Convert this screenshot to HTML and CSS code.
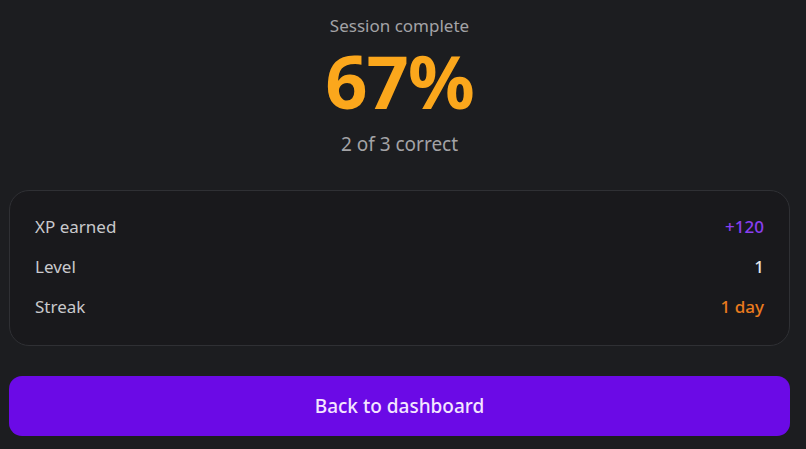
FILE: index.html
```html
<!DOCTYPE html>
<html>
<head>
<meta charset="utf-8">
<link rel="stylesheet" href="styles.css">
</head>
<body>
<main class="page">
  <section class="hero">
    <div class="hero-label">Session complete</div>
    <div class="hero-score">67%</div>
    <div class="hero-sub">2 of 3 correct</div>
  </section>
  <section class="stats">
    <div class="row"><span class="k">XP earned</span><span class="v xp">+120</span></div>
    <div class="row"><span class="k">Level</span><span class="v lvl">1</span></div>
    <div class="row"><span class="k">Streak</span><span class="v streak">1 day</span></div>
  </section>
  <button class="cta">Back to dashboard</button>
</main>
</body>
</html>
```
FILE: styles.css
```css
html, body {
  margin: 0;
  padding: 0;
  background: #1c1d20;
  height: 100%;
}
body {
  font-family: "Noto Sans", "Open Sans", sans-serif;
}
.page {
  display: flex;
  flex-direction: column;
  padding: 0 16px 0 9px;
}
.hero {
  display: flex;
  flex-direction: column;
  align-items: center;
  padding-top: 14px;
  height: 176px;
  box-sizing: border-box;
}
.hero-label {
  font-size: 17px;
  color: #a3a3a6;
  line-height: 24px;
}
.hero-score {
  font-size: 74px;
  font-weight: 700;
  color: #fba71c;
  line-height: 86px;
  letter-spacing: -1px;
}
.hero-sub {
  font-size: 19px;
  color: #a3a3a6;
  line-height: 26px;
  margin-top: 7px;
}
.stats {
  border: 1px solid #2f3034;
  border-radius: 20px;
  background: #19191c;
  padding: 24px 25px 25px 25px;
  display: flex;
  flex-direction: column;
  gap: 16px;
  height: 156px;
  box-sizing: border-box;
  margin-top: 14px;
}
.row {
  display: flex;
  justify-content: space-between;
  font-size: 17px;
  line-height: 24px;
}
.k { color: #c9c9cc; }
.v { font-weight: 500; }
.xp { color: #8a3ff0; }
.lvl { color: #e6e6e8; }
.streak { color: #ea7b1e; }
.cta {
  margin-top: 30px;
  height: 60px;
  border: none;
  border-radius: 13px;
  background: #6b0ae6;
  color: #f4e6ff;
  font-family: "Noto Sans", "Open Sans", sans-serif;
  font-size: 19px;
  font-weight: 500;
  cursor: pointer;
}
```
